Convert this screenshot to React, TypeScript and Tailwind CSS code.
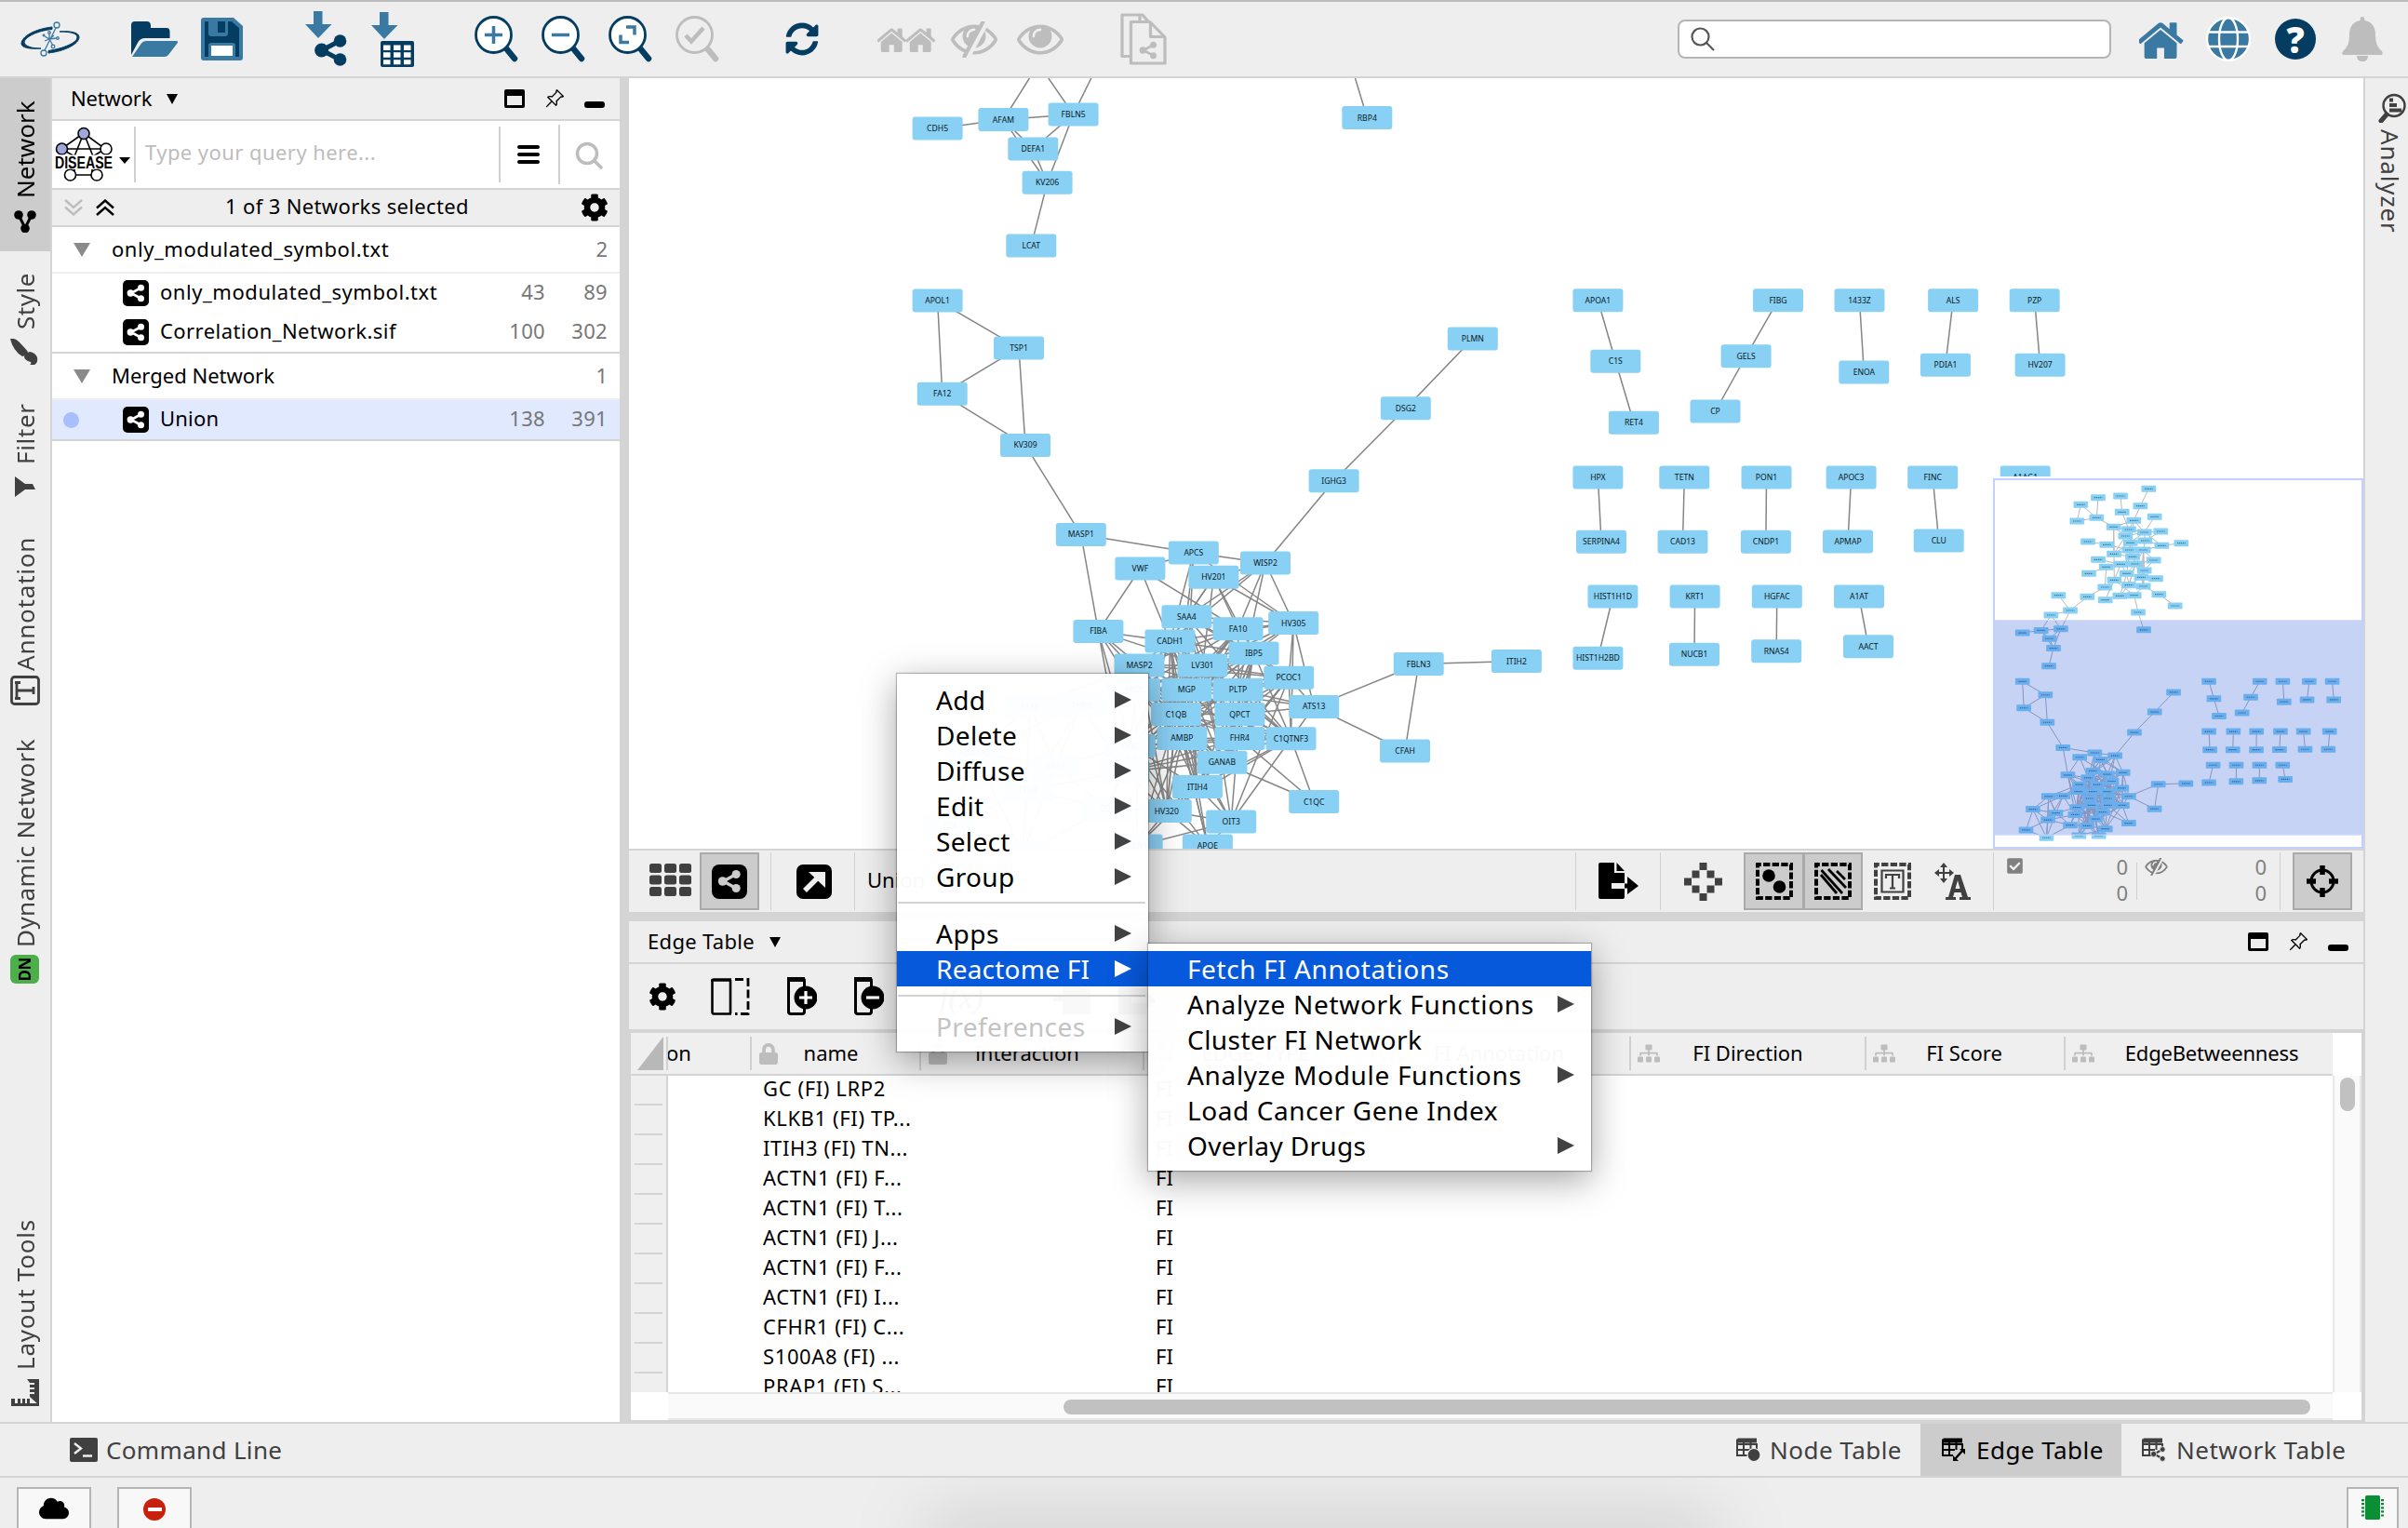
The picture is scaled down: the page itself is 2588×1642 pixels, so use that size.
import React from "react";
import { FaCog, FaLock, FaSitemap, FaCheckSquare, FaCloud, FaSyncAlt } from "react-icons/fa";
import { BsPinAngle } from "react-icons/bs";

/* ---------- network data ---------- */

type Node = [string, number, number];

const NODES: Node[] = [
  ["CDH5", 1007.6, 138], ["AFAM", 1078.4, 128.6], ["FBLN5", 1153.6, 122.9], ["DEFA1", 1110.3, 160],
  ["KV206", 1125.6, 196.3], ["LCAT", 1108.3, 264], ["RBP4", 1469.3, 126.5], ["APOL1", 1007.6, 322.9],
  ["TSP1", 1095, 373.9], ["FA12", 1012.7, 423.3], ["KV309", 1102, 478.4], ["PLMN", 1582.8, 364],
  ["DSG2", 1510.8, 438.8], ["IGHG3", 1433.6, 516.7], ["MASP1", 1161.8, 574.4], ["APCS", 1282.8, 594],
  ["WISP2", 1360, 605], ["VWF", 1225.4, 611], ["HV201", 1304.4, 620.3], ["SAA4", 1275.4, 662.8],
  ["HV305", 1390.2, 669.5], ["FA10", 1330.5, 675.8], ["FIBA", 1180.4, 678.4], ["CADH1", 1257.5, 689],
  ["IBP5", 1347.5, 702], ["MASP2", 1224.5, 715], ["LV301", 1292.4, 715], ["PCOC1", 1385.2, 728.3],
  ["PROC", 1220, 741.3], ["MGP", 1275.4, 741.3], ["PLTP", 1330.5, 741.3], ["ATS13", 1412.2, 759.4],
  ["C1QB", 1264, 767.5], ["QPCT", 1332.4, 767.5], ["AMBP", 1270.4, 793.4], ["FHR4", 1332.4, 793.4],
  ["C1QTNF3", 1387.5, 793.8], ["LYSC", 1214.8, 801.6], ["GANAB", 1313.5, 819.3], ["C8A", 1208.3, 829],
  ["ITIH4", 1286.9, 845.6], ["HV320", 1253.8, 871.5], ["OIT3", 1323.2, 883], ["C1QC", 1412.2, 861.5],
  ["FBN1", 1222.6, 908.9], ["APOE", 1297.9, 908.9], ["FBLN3", 1524.7, 713.5], ["ITIH2", 1629.9, 710.6],
  ["CFAH", 1510, 807], ["F13B", 1107, 759.8], ["THRB", 1162.5, 758], ["ADIPOQ", 1047.5, 808.6],
  ["SAA1", 1134.5, 823], ["TTHY", 1104.6, 849], ["CO9", 1189.6, 869], ["PF4", 1021, 887.4],
  ["A2AP", 1099, 917],
  ["APOA1", 1717.4, 322.7], ["C1S", 1736.3, 388.3], ["RET4", 1755.9, 454.3], ["FIBG", 1911, 322.7],
  ["GELS", 1876.6, 382.7], ["CP", 1843.5, 442], ["1433Z", 1998.5, 322.7], ["ENOA", 2003.3, 400],
  ["ALS", 2099.1, 322.7], ["PDIA1", 2090.9, 392.3], ["PZP", 2186.7, 322.7], ["HV207", 2192.6, 392.3],
  ["HPX", 1717.4, 513], ["TETN", 1810.3, 513], ["PON1", 1898.5, 513], ["APOC3", 1989.6, 513],
  ["FINC", 2077.2, 513], ["A1AG1", 2176.7, 513], ["SERPINA4", 1721, 582.3], ["CAD13", 1808.5, 582.3],
  ["CNDP1", 1897.9, 582.3], ["APMAP", 1986, 582], ["CLU", 2083.7, 581], ["A1BG", 2171.7, 581],
  ["HIST1H1D", 1733.4, 641], ["KRT1", 1821.6, 641], ["HGFAC", 1909.8, 641], ["A1AT", 1998, 641],
  ["HIST1H2BD", 1717.4, 707.3], ["NUCB1", 1821, 703.3], ["RNAS4", 1909.2, 699.7], ["AACT", 2008, 694.7],
];

const LINKS = `CDH5-AFAM AFAM-FBLN5 AFAM-DEFA1 AFAM-KV206 FBLN5-DEFA1 FBLN5-KV206 DEFA1-KV206 KV206-LCAT
APOL1-TSP1 APOL1-FA12 TSP1-FA12 TSP1-KV309 FA12-KV309 KV309-MASP1 MASP1-APCS MASP1-FIBA APCS-WISP2 VWF-APCS
VWF-FIBA VWF-CADH1 VWF-FA10 WISP2-IGHG3 IGHG3-DSG2 DSG2-PLMN APCS-CADH1 APCS-SAA4 APCS-MGP APCS-HV305
HV201-WISP2 HV201-SAA4 HV201-CADH1 HV201-FA10 HV201-IBP5 HV201-HV305 HV201-LV301 WISP2-SAA4 WISP2-CADH1
WISP2-HV305 WISP2-FA10 WISP2-PLTP HV305-SAA4 HV305-FA10 HV305-IBP5 HV305-LV301 HV305-PCOC1 HV305-ATS13
HV305-C1QTNF3 HV305-CADH1 HV305-MGP FIBA-CADH1 FIBA-LV301 FIBA-MASP2 FIBA-PROC FIBA-LYSC FIBA-C1QB FIBA-C8A
ATS13-PCOC1 ATS13-PLTP ATS13-QPCT ATS13-C1QTNF3 ATS13-MGP ATS13-FBLN3 ATS13-CFAH FBLN3-CFAH FBLN3-ITIH2
C1QC-C1QTNF3 C1QC-FHR4 C1QC-GANAB OIT3-C1QTNF3 OIT3-PCOC1 OIT3-GANAB OIT3-ITIH4 OIT3-AMBP OIT3-HV320
OIT3-FBN1 OIT3-QPCT OIT3-C1QB APOE-HV320 APOE-AMBP APOE-C1QB APOE-ITIH4 APOE-OIT3 APOE-LYSC FBN1-HV320
FBN1-ITIH4 FBN1-C1QB FBN1-AMBP FBN1-PROC F13B-THRB F13B-ADIPOQ F13B-SAA1 F13B-TTHY F13B-PROC F13B-A2AP
F13B-MASP2 THRB-SAA1 THRB-ADIPOQ THRB-PROC THRB-C8A THRB-TTHY THRB-MASP2 ADIPOQ-SAA1 ADIPOQ-TTHY ADIPOQ-PF4
ADIPOQ-A2AP SAA1-LYSC SAA1-TTHY SAA1-A2AP SAA1-CO9 SAA1-F13B TTHY-PF4 TTHY-CO9 TTHY-A2AP CO9-A2AP CO9-C8A
CO9-HV320 CO9-LYSC PF4-A2AP TTHY-C8A APOA1-C1S C1S-RET4 FIBG-GELS GELS-CP 1433Z-ENOA ALS-PDIA1 PZP-HV207
HPX-SERPINA4 TETN-CAD13 PON1-CNDP1 APOC3-APMAP FINC-CLU A1AG1-A1BG HIST1H1D-HIST1H2BD KRT1-NUCB1 HGFAC-RNAS4
A1AT-AACT`.split(/\s+/).map((s) => s.split("-"));

const CORE = [
  "SAA4", "FA10", "CADH1", "IBP5", "MASP2", "LV301", "PROC", "MGP", "PLTP", "C1QB", "QPCT",
  "AMBP", "FHR4", "LYSC", "GANAB", "ITIH4", "HV320", "PCOC1", "C1QTNF3", "C8A",
];

const POS = new Map(NODES.map(([n, x, y]) => [n, [x, y]]));

function coreLinks() {
  const out: string[][] = [];
  let seed = 7;
  for (let i = 0; i < CORE.length; i++)
    for (let j = i + 1; j < CORE.length; j++) {
      seed = (seed * 1103515245 + 12345) % 2147483648;
      if (seed / 2147483648 < 0.68) out.push([CORE[i], CORE[j]]);
    }
  return out;
}

const EDGES = [...LINKS, ...coreLinks()].map(([a, b]) => [...POS.get(a)!, ...POS.get(b)!]);
const OFFSCREEN = [[1106.4, 84, 1078.4, 128.6], [1126.8, 84, 1153.6, 122.9], [1172.8, 84, 1153.6, 122.9], [1456.5, 84, 1469.3, 126.5]];

/* upper part of the overview, in overview units */
const TOP: number[][] = [
  [538, 76], [375, 104], [319, 127], [447, 99], [511, 131], [307, 180], [370, 169], [452, 151], [490, 178], [557, 166],
  [425, 199], [474, 207], [524, 216], [577, 213], [463, 228], [479, 250], [526, 243], [342, 246], [403, 256], [580, 259],
  [643, 251], [475, 273], [521, 273], [426, 286], [486, 295], [375, 304], [554, 306], [448, 319], [495, 318], [401, 328],
  [524, 339], [345, 349], [467, 349], [514, 361], [561, 365], [427, 370], [474, 386], [521, 390], [397, 393], [445, 421],
  [491, 419], [398, 434], [571, 416], [340, 424], [247, 419], [623, 453], [285, 468], [504, 474], [223, 483],
];
const TOP_LINKS: number[][] = [
  [0, 4], [4, 8], [1, 6], [2, 6], [2, 5], [5, 6], [6, 10], [3, 7], [7, 11], [8, 10], [8, 11], [8, 12], [9, 12], [10, 11],
  [10, 14], [10, 23], [10, 35], [11, 12], [11, 15], [12, 13], [12, 14], [12, 16], [12, 19], [13, 16], [14, 15], [14, 23], [15, 16],
  [15, 21], [16, 22], [17, 18], [18, 21], [19, 20], [19, 22], [19, 16], [21, 22], [21, 24], [21, 23], [22, 24], [22, 26],
  [22, 28], [22, 30], [22, 33], [22, 37], [23, 24], [24, 27], [24, 28], [25, 27], [26, 28], [26, 30], [27, 29], [27, 28],
  [27, 32], [27, 35], [28, 30], [28, 32], [28, 33], [28, 36], [29, 31], [29, 38], [30, 33], [30, 37], [32, 36], [33, 36],
  [33, 34], [33, 37], [35, 38], [35, 40], [35, 41], [36, 39], [36, 28], [32, 39], [37, 42], [37, 40], [38, 43], [42, 45], [43, 46],
  [44, 46], [46, 48], [40, 47], [12, 23], [8, 32], [11, 28],
];

const mx = (x: number) => 131 + (x - 1007.6) * 0.847;
const my = (y: number) => 697 + (y - 322.9) * 0.848;

function NetworkGraph() {
  return (
    <svg className="block h-[828px] w-[1864px]" viewBox="676 84 1864 828">
      <g stroke="#858585" strokeWidth="1.5">
        {[...EDGES, ...OFFSCREEN].map(([a, b, c, d], i) => (
          <line key={i} x1={a} y1={b} x2={c} y2={d} />
        ))}
      </g>
      {NODES.map(([n, x, y]) => (
        <g key={n}>
          <rect x={x - 27} y={y - 12.5} width="54" height="25" rx="3" fill="#89d0f5" />
          <text x={x} y={y + 3} textAnchor="middle" className="text-[8.6px]" fill="#0a1820">{n}</text>
        </g>
      ))}
    </svg>
  );
}

function MiniNode({ x, y }: { x: number; y: number }) {
  return (
    <g>
      <rect x={x - 23.5} y={y - 10.5} width="47" height="21" rx="2" fill="#89d0f5" />
      <path d={`M${x - 13} ${y}H${x + 13}`} stroke="#3f7795" strokeWidth="3.500" strokeDasharray="4 2" />
    </g>
  );
}

function Overview() {
  return (
    <div className="absolute bottom-0 right-0 h-[398px] w-[398px] border-2 border-[#c0d0ff] bg-white outline outline-2 outline-white">
      <svg className="block h-[394px] w-[394px]" viewBox="42 48 1182 1182">
        <g stroke="#b9b9b9" strokeWidth="3">
          {TOP_LINKS.map(([a, b], i) => (
            <line key={i} x1={TOP[a][0]} y1={TOP[a][1]} x2={TOP[b][0]} y2={TOP[b][1]} />
          ))}
          <path d="M223 483L191 533M223 483L255 528M285 468L255 528M504 474L522 531" />
          {EDGES.map(([a, b, c, d], i) => (
            <line key={i} x1={mx(a)} y1={my(b)} x2={mx(c)} y2={my(d)} stroke="#acaebb" strokeWidth="3" />
          ))}
        </g>
        {TOP.map(([x, y], i) => <MiniNode key={i} x={x} y={y} />)}
        {NODES.map(([n, x, y]) => <MiniNode key={n} x={mx(x)} y={my(y)} />)}
        <rect x="42" y="498" width="1182" height="694" fill="rgba(0,60,210,.225)" />
        <path d="M42 499.500H1224M42 1191.500H1224" stroke="#d3defa" strokeWidth="3" />
      </svg>
    </div>
  );
}

/* ---------- icons ---------- */

const DARK = "#053c61";
const MID = "#3a79a1";
const DIM = "#bdbdbd";

const HOME = "M1408 992v480q0 26-19 45t-45 19h-384v-384h-256v384h-384q-26 0-45-19t-19-45v-480q0-1 .5-3t.5-3l575-474 575 474q1 2 1 6zm223-69l-62 74q-8 9-21 11h-3q-13 0-21-7l-692-577-692 577q-12 8-24 7-13-2-21-11l-62-74q-8-10-7-23.500t11-21.500l719-599q32-26 76-26t76 26l244 204v-195q0-14 9-23t23-9h192q14 0 23 9t9 23v408l219 182q10 8 11 21.500t-7 23.500z";
const EYE = "M1664 960q-152-236-381-353 61 104 61 225 0 185-131.500 316.500t-316.500 131.500-316.500-131.500-131.500-316.500q0-121 61-225-229 117-381 353 133 205 333.500 326.500t434.500 121.500 434.500-121.500 333.500-326.500zm-720-384q0-20-14-34t-34-14q-125 0-214.500 89.500t-89.500 214.500q0 20 14 34t34 14 34-14 14-34q0-86 61-147t147-61q20 0 34-14t14-34zm848 384q0 34-20 69-140 230-376.500 368.500t-499.500 138.500-499.500-139-376.500-368q-20-35-20-69t20-69q140-229 376.500-368t499.500-139 499.500 139 376.500 368q20 35 20 69z";

function Home({ className, color }: { className: string; color: string }) {
  return <svg className={className} viewBox="72 180 1648 1356" fill={color}><path d={HOME} /></svg>;
}

function Eye({ className, color, slash }: { className: string; color: string; slash?: boolean }) {
  return (
    <svg className={className} viewBox="0 260 1792 1400" fill={color}>
      <path d={EYE} />
      {slash && (
        <>
          <path d="M640 1640L1360 300" stroke="#eee" strokeWidth="210" />
          <path d="M520 1610L1230 290" stroke={color} strokeWidth="150" strokeLinecap="round" />
        </>
      )}
    </svg>
  );
}

function Lens({ children, color = DARK, fill = "#fff" }: { children: React.ReactNode; color?: string; fill?: string }) {
  return (
    <svg className="mr-6 h-[50px] w-12" viewBox="0 0 48 50" fill="none">
      <path d="M34 35L43 46" stroke={color} strokeWidth="6.500" strokeLinecap="round" />
      <circle cx="20.500" cy="20.500" r="19" fill={fill} stroke={color} strokeWidth="2.800" />
      {children}
    </svg>
  );
}

const SHARE = (
  <>
    <path d="M15 4.500L5 10L15 15.500" fill="none" stroke="currentColor" strokeWidth="2.600" />
    <circle cx="15.500" cy="4.200" r="3.500" /><circle cx="4.300" cy="10" r="3.700" /><circle cx="15.500" cy="15.800" r="3.500" />
  </>
);

function ShareBadge({ className, size }: { className: string; size: string }) {
  return (
    <span className={className}>
      <svg className={size} viewBox="0 0 20 20" fill="currentColor">{SHARE}</svg>
    </span>
  );
}

function WindowButtons() {
  return (
    <div className="ml-auto flex items-center">
      <svg className="h-5 w-[22px]" viewBox="0 0 22 20"><path d="M2 0h18a2 2 0 0 1 2 2v16a2 2 0 0 1-2 2H2a2 2 0 0 1-2-2V2a2 2 0 0 1 2-2zM3 7v10h16V7z" fillRule="evenodd" /></svg>
      <BsPinAngle className="ml-[21px] size-[22px]" />
      <span className="ml-[21px] mt-3 h-[7px] w-[22px] rounded-[3px] bg-black" />
    </div>
  );
}

function Down({ className }: { className: string }) {
  return <svg className={className} viewBox="0 0 10 10" preserveAspectRatio="none" fill="currentColor"><path d="M0 0h10L5 10z" /></svg>;
}

/* ---------- top toolbar ---------- */

function Toolbar() {
  return (
    <div className="flex h-[82px] shrink-0 items-center border-b-2 border-[#d4d4d4]">
      <svg className="ml-5 h-[44px] w-[68px]" viewBox="20 20 68 44" fill="none" stroke={DARK}>
        <path d="M56 29C38 31 23 39 23 47C23 51 31 53 44 52C34 52 28 50 26 46C26 40 40 33 56 31.500z" fill={DARK} strokeWidth="1" />
        <path d="M52 57C70 55 85 47 85 40C85 35 77 33 64 34C76 34 83 36 83 40C83 46 68 52 52 54.500z" fill={DARK} strokeWidth="1" />
        <g stroke={MID} strokeWidth="1.300">
          <path d="M60 30L48 54M53 36V42L48 39M53 42L61 41M53 42L57 49M53 42L48 44M53 42L58 38" />
          <circle cx="61" cy="27" r="3" fill="#eee" /><circle cx="47" cy="57" r="3" fill="#eee" />
          <circle cx="53" cy="35" r="1.300" /><circle cx="62" cy="41" r="1.300" /><circle cx="57" cy="50" r="1.800" /><circle cx="47" cy="38" r=".8" />
        </g>
      </svg>
      <svg className="ml-[52px] h-10 w-[52px]" viewBox="140 22 52 40">
        <path d="M141 59V27Q141 23 145 23H158Q161.500 23 162 27V30H179Q182.500 30 182.500 34V41H156Q151 41 148.500 45z" fill={DARK} />
        <path d="M142 61L152 46.500Q153.500 44 157 44H189.500Q192 44 190.500 46.500L181 59Q179.500 61 176.500 61z" fill={MID} />
      </svg>
      <svg className="ml-6 h-[46px] w-[46px]" viewBox="0 0 46 46">
        <path d="M3 0h32l10 9v34a3 3 0 0 1-3 3H3a3 3 0 0 1-3-3V3a3 3 0 0 1 3-3z" fill={MID} />
        <path d="M4 4h4v13q0 3 3 3h15q3 0 3-3V4h4l8 7v31h-4V30q0-3-3-3H11q-3 0-3 3v12H4z" fill={DARK} />
        <path d="M18 4h8v12h-8z" fill={DARK} />
        <path d="M11 30h23v11H11z" fill="#fff" />
      </svg>
      <svg className="ml-[66px] h-[60px] w-[46px]" viewBox="328 13 46 60">
        <path d="M337 13h9.500v14H356.500L342 42L328 27h9z" fill={MID} />
        <path d="M365 45L346 55L365 65" fill="none" stroke={DARK} strokeWidth="5" />
        <g fill={DARK}><circle cx="365.500" cy="45" r="6.800" /><circle cx="345.600" cy="55" r="7.500" /><circle cx="365.500" cy="65" r="6.800" /></g>
      </svg>
      <svg className="ml-[25px] h-[60px] w-[47px]" viewBox="399 13 47 60">
        <path d="M408 14h9.500v14H427.500L413 43L399 28h9z" fill={MID} />
        <rect x="409" y="45" width="36" height="28" rx="2" fill={DARK} />
        <path d="M412 49.500h7.500v5.500H412zM423 49.500h7.500v5.500H423zM434 49.500h7.500v5.500H434zM412 57.300h7.500v5.500H412zM423 57.300h7.500v5.500H423zM434 57.300h7.500v5.500H434zM412 65.200h7.500v5H412zM423 65.200h7.500v5H423zM434 65.200h7.500v5H434z" fill="#fff" />
      </svg>
      <div className="ml-16 flex">
        <Lens><path d="M11 20.500h19M20.500 11v19" stroke={MID} strokeWidth="3.500" /></Lens>
        <Lens><path d="M11 20.500h19" stroke={MID} strokeWidth="3.500" /></Lens>
        <Lens><path d="M19 12H28V20.500M13 20.500V28.500H22" stroke={MID} strokeWidth="3.500" /></Lens>
        <Lens color={DIM} fill="#eee"><path d="M11 21l6 6.500L30 13" stroke={DIM} strokeWidth="4.500" /></Lens>
      </div>
      <FaSyncAlt className="ml-[46px] size-[36px]" color={DARK} />
      <div className="ml-[63px] flex">
        <Home className="h-[27px] w-[33px]" color={DIM} />
        <Home className="-ml-[2px] h-[27px] w-[33px]" color={DIM} />
      </div>
      <Eye className="ml-[15px] h-[39px] w-[50px]" color={DIM} slash />
      <Eye className="ml-[21px] h-[39px] w-[50px]" color={DIM} />
      <svg className="ml-[61px] h-[56px] w-[50px]" viewBox="0 0 50 56" fill="none" stroke={DIM} strokeWidth="3.200" strokeLinejoin="round">
        <path d="M11 46.500H2V2H24L30 9M21 2V9" />
        <path d="M11.500 9.500H32L48 26V54H11.500zM32.500 9.500V25.500H48" />
        <g fill={DIM} stroke="none" color={DIM} transform="translate(20 30)">{SHARE}</g>
      </svg>
      <div className="ml-auto flex h-[42px] w-[466px] items-center rounded-lg border-2 border-[#b5b5b5] bg-white pl-3">
        <svg className="h-[26px] w-7" viewBox="0 0 28 26" fill="none" stroke="#555" strokeWidth="2.200"><circle cx="10.500" cy="10.500" r="9" /><path d="M17 17l8 8" /></svg>
      </div>
      <Home className="ml-[30px] h-[41px] w-[50px]" color={MID} />
      <svg className="ml-[21px] h-[50px] w-[50px]" viewBox="0 0 50 50" fill="none" stroke="#fff" strokeWidth="2.400">
        <circle cx="25" cy="25" r="23" fill={MID} />
        <ellipse cx="25" cy="25" rx="10" ry="23" /><path d="M4 17.500h42M4 33h42" />
      </svg>
      <span className="ml-[25px] flex size-[44px] items-center justify-center rounded-full bg-[#053c61] text-[38px] font-black leading-none text-white">?</span>
      <svg className="ml-7 mr-[27px] h-12 w-11" viewBox="0 0 44 48" fill={DIM}>
        <path d="M22 0q2.500 0 2.500 4Q36 6 36 20Q36 32 43 37Q45 41 42 41H2Q-1 41 1 37Q8 32 8 20Q8 6 19.500 4Q19.500 0 22 0zM16 42h12q0 6-6 6t-6-6z" />
      </svg>
    </div>
  );
}

/* ---------- side strips ---------- */

const VTEXT = "flex rotate-180 items-center justify-center whitespace-nowrap text-[26px] leading-[32px] [writing-mode:vertical-rl]";

function SideStrip() {
  return (
    <div className="flex w-14 shrink-0 flex-col border-r-2 border-[#d4d4d4] text-[#404040]">
      <div className="flex h-[186px] flex-col items-center bg-[#ccc] pr-px pt-[26px] text-black">
        <span className={`${VTEXT} h-[102px]`}>Network</span>
        <svg className="mt-[14px] h-6 w-6" viewBox="0 0 24 24"><path d="M5 5L12 19L19 5" fill="none" stroke="#000" strokeWidth="3" /><circle cx="5" cy="5" r="4.800" /><circle cx="19" cy="5" r="4.800" /><circle cx="12" cy="19.500" r="4.800" /></svg>
      </div>
      <div className="flex flex-col items-center pr-px pt-6">
        <span className={`${VTEXT} h-[59px] tracking-[0.02em]`}>Style</span>
        <svg className="mr-px mt-[11px] h-[28px] w-[30px]" viewBox="12 364 30 28" fill="#404040"><path d="M12 364q5-1 9 3q7 7 10 11q-1 4-6 5q-10-6-13-19zM33 378q6 1 8 6q1 6-3 8h-5q2-1 1-3q-7-2-7-6q2-4 6-5z" /></svg>
      </div>
      <div className="flex flex-col items-center pr-px pt-[41px]">
        <span className={`${VTEXT} h-[66px] tracking-[0.025em]`}>Filter</span>
        <svg className="mt-[12px] h-6 w-[22px]" viewBox="0 0 22 24" fill="#404040"><path d="M0 1v22L11 15h11l-3-6h-8z" /></svg>
      </div>
      <div className="flex flex-col items-center pr-px pt-[43px]">
        <span className={`${VTEXT} h-[141px] tracking-[0.03em]`}>Annotation</span>
        <svg className="mt-[7px] h-8 w-8" viewBox="0 0 32 32" fill="none" stroke="#404040" strokeWidth="2.800"><rect x="1.500" y="1.500" width="29" height="29" rx="3" /><path d="M7 25v-18M7 16h18M5 24.500h6M5 7.500h6M25 12v8" /></svg>
      </div>
      <div className="flex flex-col items-center pr-px pt-[37px]">
        <span className={`${VTEXT} h-[222px] tracking-[0.016em]`}>Dynamic Network</span>
        <span className="mt-[9px] flex h-[31px] w-[31px] items-center justify-center rounded-md bg-[#4caf4a] text-black"><span className="rotate-180 text-[17px] font-bold leading-none tracking-tight [writing-mode:vertical-rl]">DN</span></span>
      </div>
      <div className="mt-auto flex flex-col items-center pb-[16px] pr-px">
        <span className={`${VTEXT} h-[159px] tracking-[0.03em]`}>Layout Tools</span>
        <svg className="mt-[12px] h-[30px] w-[30px]" viewBox="0 0 30 30" fill="#404040"><path d="M0 21h4v5h3v-5h3v5h2v-5h3v5h2v-5h3v5h10v3H0zM17 0h13v28L20 19V16h5v-2h-5v-3h5V9h-5V6h5V4h-5z" /></svg>
      </div>
    </div>
  );
}

function RightStrip() {
  return (
    <div className="flex flex-1 flex-col items-center pl-[11px] text-[#404040]">
      <svg className="mt-[16px] h-[32px] w-[30px]" viewBox="0 0 30 32" fill="none" stroke="#404040"><circle cx="17" cy="13.500" r="11.500" strokeWidth="2.400" /><path d="M9 23L3 30" strokeWidth="5" strokeLinecap="round" /><path d="M12 7.500h4M12 13h8M12 18.500h13" strokeWidth="4" /></svg>
      <span className="mr-1 mt-[7px] text-[26px] leading-[32px] tracking-[0.032em] [writing-mode:vertical-rl]">Analyzer</span>
    </div>
  );
}

/* ---------- left panel ---------- */

function NetRow({ name, nodes, edges, selected, track = "" }: { name: string; nodes: string; edges: string; selected?: boolean; track?: string }) {
  return (
    <div className={selected ? "flex h-[42px] items-center bg-[#e1e9ff] pl-3 pr-[13px]" : "flex h-[42px] items-center pl-3 pr-[13px]"}>
      <span className={selected ? "size-[17px] rounded-full bg-[#a9bffa]" : "size-[17px]"} />
      <ShareBadge className="ml-[47px] flex size-7 items-center justify-center rounded-[5px] bg-black text-white" size="size-5" />
      <span className={`ml-3 flex-1 pb-[3px] ${track}`}>{name}</span>
      <span className="pb-[3px] tracking-[0.015em] text-[#777]">{nodes}</span>
      <span className="w-[67px] pb-[3px] text-right tracking-[0.015em] text-[#777]">{edges}</span>
    </div>
  );
}

function Collection({ name, count, track }: { name: string; count: string; track: string }) {
  return (
    <div className="flex h-[50px] items-center border-b-2 border-[#eee] pl-[23px] pr-[13px]">
      <Down className="h-[15px] w-[18px] text-[#8a8a8a]" />
      <span className={`ml-[23px] flex-1 pb-[2px] ${track}`}>{name}</span>
      <span className="pb-[2px] text-[#777]">{count}</span>
    </div>
  );
}

function NetworkPanel() {
  return (
    <div className="flex w-[610px] shrink-0 flex-col bg-white text-[22px]">
      <div className="flex h-[46px] items-center border-b-2 border-[#d4d4d4] bg-[#eee] pl-[20px] pr-4">
        <span className="pb-px tracking-[-0.008em]">Network</span>
        <Down className="ml-[16px] h-[11px] w-3" />
        <WindowButtons />
      </div>
      <div className="flex h-[74px] items-center border-b-2 border-[#d4d4d4]">
        <svg className="ml-[2px] h-[60px] w-[64px] shrink-0" viewBox="58 136 64 60" fill="#fff" stroke="#000" strokeWidth="1.600">
          <path d="M90 143L66 160H113L90 143L80 168M90 143L100 168M66 160L80 168M113 160L100 168M76 188H104M80 182V188M99 182V188" fill="none" />
          <circle cx="90" cy="143.500" r="6" fill="#9fa8da" /><circle cx="66.500" cy="160" r="6" fill="#9fa8da" /><circle cx="114" cy="160" r="6" />
          <circle cx="75.500" cy="188" r="6" /><circle cx="104" cy="188" r="6" />
          <rect x="58" y="166.500" width="64" height="15" stroke="none" />
          <text x="59" y="181" fill="#000" stroke="none" textLength="62" lengthAdjust="spacingAndGlyphs" className="text-[17.500px] font-semibold" fontFamily="Liberation Sans, sans-serif">DISEASE</text>
        </svg>
        <Down className="ml-[6px] mt-[12px] h-[7px] w-3" />
        <span className="ml-1 h-[60px] w-[2px] bg-[#d0d0d0]" />
        <span className="ml-[10px] flex-1 pb-[5px] tracking-[0.02em] text-[#bdbdbd]">Type your query here...</span>
        <span className="h-[60px] w-[2px] bg-[#d0d0d0]" />
        <span className="ml-[18px] flex h-5 w-6 flex-col justify-between"><i className="h-1 rounded-sm bg-black" /><i className="h-1 rounded-sm bg-black" /><i className="h-1 rounded-sm bg-black" /></span>
        <span className="ml-5 h-16 w-[2px] bg-[#d0d0d0]" />
        <svg className="ml-4 mr-[18px] mt-[2px] h-[30px] w-[30px]" viewBox="0 0 30 30" fill="none" stroke="#bdbdbd" strokeWidth="3.500" strokeLinecap="round"><circle cx="13" cy="13" r="10.500" /><path d="M21 21l7 7" /></svg>
      </div>
      <div className="flex h-10 items-center border-b-2 border-[#d4d4d4] bg-[#eee] pl-[13px] pr-3">
        <svg className="h-[18px] w-5" viewBox="0 0 20 18" fill="none" stroke="#bdbdbd" strokeWidth="2.400"><path d="M1 1l9 8l9-8M1 8.500l9 8l9-8" /></svg>
        <svg className="ml-[14px] h-[18px] w-5" viewBox="0 0 20 18" fill="none" stroke="#000" strokeWidth="2.400"><path d="M1 9.500l9-8l9 8M1 17l9-8l9 8" /></svg>
        <span className="flex-1 pb-[3px] pr-px text-center tracking-[0.016em]">1 of 3 Networks selected</span>
        <FaCog className="size-[30px]" />
      </div>
      <Collection name="only_modulated_symbol.txt" count="2" track="tracking-[0.025em]" />
      <div className="border-b-2 border-[#d4d4d4]">
        <NetRow name="only_modulated_symbol.txt" nodes="43" edges="89" track="tracking-[0.025em]" />
        <NetRow name="Correlation_Network.sif" nodes="100" edges="302" track="tracking-[0.02em]" />
      </div>
      <Collection name="Merged Network" count="1" track="tracking-normal" />
      <div className="border-b-2 border-[#d4d4d4]">
        <NetRow name="Union" nodes="138" edges="391" selected track="tracking-[0.01em]" />
      </div>
    </div>
  );
}

/* ---------- network view toolbar ---------- */

const DASHED_FRAME = <rect x="2" y="2" width="36" height="36" fill="none" stroke="currentColor" strokeWidth="4" strokeDasharray="7.300 2.300" strokeDashoffset="3.500" />;

function ViewToolbar() {
  return (
    <div className="flex h-[68px] items-center border-t-2 border-[#d4d4d4] pl-[22px] pr-3">
      <svg className="mb-1 h-[35px] w-[45px]" viewBox="0 0 45 35" fill="#404040">
        {[0, 16, 32].map((x) => [0, 12.5, 25].map((y) => <rect key={x + "-" + y} x={x} y={y} width="13" height="10" rx="2.500" />))}
      </svg>
      <span className="ml-[9px] flex h-[62px] w-[64px] items-center justify-center border-2 border-[#aaa] bg-[#ccc]">
        <ShareBadge className="flex h-[37px] w-[38px] items-center justify-center rounded-lg bg-black text-[#ccc]" size="size-[26px]" />
      </span>
      <span className="ml-3 h-[62px] w-px bg-[#d0d0d0]" />
      <svg className="ml-[27px] h-[37px] w-[38px]" viewBox="0 0 38 37"><rect width="38" height="37" rx="7" /><path d="M9 28L24 13" stroke="#eee" strokeWidth="5.500" /><path d="M13 8H31V25z" fill="#eee" /></svg>
      <span className="ml-6 h-[62px] w-px bg-[#d0d0d0]" />
      <span className="ml-[13px] pb-[3px] text-[22px]">Union</span>
      <span className="ml-auto h-[62px] w-px bg-[#d0d0d0]" />
      <svg className="ml-6 h-10 w-[44px]" viewBox="0 0 44 40"><path d="M2 0H17V11H28V22H14V28H28V37a2 2 0 0 1-2 2H2a2 2 0 0 1-2-2V2a2 2 0 0 1 2-2z" /><path d="M19.500 0L28 9H19.500zM31 15L43 25L31 34z" /><path d="M15 22.500h14v5H15z" fill="#eee" /><path d="M28 22.500h4v5h-4z" /></svg>
      <span className="ml-[22px] h-[62px] w-px bg-[#d0d0d0]" />
      <svg className="ml-[25px] h-[41px] w-[41px]" viewBox="0 0 41 41" fill="#404040"><path d="M16.500 0h8v8h-8zM8.500 8.500h8v8h-8zM24.500 8.500h8v8h-8zM0 16.500h8v8H0zM33 16.500h8v8h-8zM8.500 24.500h8v8h-8zM24.500 24.500h8v8h-8zM16.500 33h8v8h-8z" /></svg>
      <span className="ml-[23px] flex h-[62px] w-[65px] items-center justify-center border-2 border-[#aaa] bg-[#ccc]">
        <svg className="size-10" viewBox="0 0 40 40">{DASHED_FRAME}<circle cx="14" cy="14" r="6.800" /><circle cx="25.500" cy="26" r="6.800" /></svg>
      </span>
      <span className="-ml-px flex h-[62px] w-[64px] items-center justify-center border-2 border-[#aaa] bg-[#ccc]">
        <svg className="size-10" viewBox="0 0 40 40">{DASHED_FRAME}<path d="M7 13L24 33M7.500 8L30 33M15 7L34 27M24 9L33 18" stroke="#000" strokeWidth="2.800" /></svg>
      </span>
      <svg className="ml-3 size-10 text-[#404040]" viewBox="0 0 40 40">{DASHED_FRAME}<path d="M8.500 8.500h23v23h-23zM13 17v-4h14v4M20 13v14M17 27.500h6" fill="none" stroke="#404040" strokeWidth="2.200" /></svg>
      <svg className="ml-[25px] h-10 w-[40px]" viewBox="0 0 40 40" fill="#404040">
        <path d="M10 2v18M1 11h18" stroke="#404040" strokeWidth="2" /><path d="M10 0l4 5H6zM10 22l4-5H6zM0 11l5-4v8zM21 11l-5-4v8z" />
        <path d="M22 13h6l8 24h3v3h-12v-3h3l-1.500-5h-7L20 37h3v3H12v-3h3zM22.500 28h5L25 19z" fillRule="evenodd" />
      </svg>
      <span className="ml-[23px] h-[62px] w-px bg-[#d0d0d0]" />
      <div className="ml-[13px] flex h-[62px] w-[131px] justify-between text-[22px] leading-[28px] text-[#808080]">
        <FaCheckSquare className="mt-[5px] size-[19px]" />
        <span className="mt-px flex flex-col"><span>0</span><span>0</span></span>
      </div>
      <span className="ml-[9px] h-10 w-px bg-[#d0d0d0]" />
      <div className="ml-[8px] flex h-[62px] w-[131px] justify-between text-[22px] leading-[28px] text-[#808080]">
        <Eye className="mt-[6px] h-[19px] w-[25px]" color="#808080" slash />
        <span className="mt-px flex flex-col"><span>0</span><span>0</span></span>
      </div>
      <span className="ml-[14px] h-[62px] w-px bg-[#d0d0d0]" />
      <span className="ml-[13px] flex h-[62px] w-[64px] items-center justify-center border-2 border-[#aaa] bg-[#ccc]">
        <svg className="size-9" viewBox="0 0 36 36" fill="none" stroke="#000"><circle cx="18" cy="18" r="12" strokeWidth="3" /><path d="M18 1v10M18 25v10M1 18h10M25 18h10" strokeWidth="5.500" /></svg>
      </span>
    </div>
  );
}

/* ---------- edge table ---------- */

const ROWS = ["GC (FI) LRP2", "KLKB1 (FI) TP...", "ITIH3 (FI) TN...", "ACTN1 (FI) F...", "ACTN1 (FI) T...", "ACTN1 (FI) J...", "ACTN1 (FI) F...", "ACTN1 (FI) I...", "CFHR1 (FI) C...", "S100A8 (FI) ...", "PRAP1 (FI) S..."];

function ColumnButton({ minus }: { minus?: boolean }) {
  return (
    <svg className="h-[42px] w-8" viewBox="0 0 32 42" fill="none" stroke="#000">
      <rect x="1.500" y="1.500" width="17" height="38" rx="2.500" strokeWidth="3" /><path d="M0 2.500h19" strokeWidth="5" />
      <circle cx="20" cy="22" r="12.500" fill="#000" stroke="none" />
      <path d={minus ? "M13 22h14" : "M13 22h14M20 15v14"} stroke="#fff" strokeWidth="3.200" />
    </svg>
  );
}

function HeaderCell({ className, icon, label, labelClass = "pr-[38px]" }: { className: string; icon: "lock" | "tree"; label: string; labelClass?: string }) {
  return (
    <div className={`flex h-9 items-center border-l-2 border-[#d0d0d0] ${className}`}>
      {icon === "lock" ? <FaLock className="ml-2 h-[23px] w-5 text-[#bdbdbd]" /> : <FaSitemap className="ml-[7px] h-[22px] w-6 text-[#bdbdbd]" />}
      <span className={`flex-1 pb-[2px] text-center ${labelClass}`}>{label}</span>
    </div>
  );
}

function EdgeTable() {
  return (
    <div className="flex min-h-0 flex-1 flex-col border-b-2 border-[#d4d4d4] text-[22px]">
      <div className="flex h-[46px] shrink-0 items-center border-b-2 border-[#d4d4d4] pl-[20px] pr-4">
        <span className="pb-[2px] tracking-[0.014em]">Edge Table</span>
        <Down className="ml-[16px] h-[11px] w-3" />
        <WindowButtons />
      </div>
      <div className="flex h-[74px] shrink-0 items-center border-b-4 border-[#d4d4d4] pl-[21px]">
        <FaCog className="size-[30px]" />
        <svg className="ml-[37px] h-10 w-[42px]" viewBox="0 0 42 40" fill="none" stroke="#000"><path d="M22 1.500H3Q1.500 1.500 1.500 4V36Q1.500 38.500 3 38.500H22M21 2V38M0 2.500h22" strokeWidth="2.600" /><path d="M26 1.500H40V38.500H26" strokeWidth="2.800" strokeDasharray="9 3.500" /></svg>
        <span className="ml-10 flex gap-10"><ColumnButton /><ColumnButton minus /></span>
        <span className="ml-[60px] w-16 font-['Liberation_Serif',serif] text-[34px] italic">f(x)</span>
        <svg className="ml-[58px] h-[38px] w-[110px]" viewBox="0 0 110 38"><path d="M10 0h20v10h10v28H10V24H0V18h20V10l12 11L20 32V24H10zM70 0h20v10h10v10H84v6h16v12H70zM100 14l11 9l-11 9z" /></svg>
      </div>
      <div className="flex min-h-0 flex-1 border-x-2 border-[#d4d4d4] bg-white">
        <div className="flex w-[1830px] flex-col">
          <div className="flex h-[46px] shrink-0 items-center border-b-2 border-[#d4d4d4] bg-[#efefef]">
            <svg className="ml-[6px] h-9 w-[32px]" viewBox="0 0 30 36"><path d="M28 0V36H0z" fill="#b8b8b8" /></svg>
            <div className="h-9 w-[90px] overflow-hidden border-l-2 border-[#d0d0d0]"><span className="-ml-[2px] block leading-[34px]">on</span></div>
            <HeaderCell className="w-[182px]" icon="lock" label="name" />
            <HeaderCell className="w-[240px]" icon="lock" label="interaction" />
            <HeaderCell className="w-[248px]" icon="tree" label="EDGE_TYPE" />
            <HeaderCell className="w-[275px]" icon="tree" label="FI Annotation" />
            <HeaderCell className="w-[253px]" icon="tree" label="FI Direction" labelClass="pr-[31px]" />
            <HeaderCell className="w-[214px]" icon="tree" label="FI Score" labelClass="pr-[33px]" />
            <HeaderCell className="w-[289px]" icon="tree" label="EdgeBetweenness" labelClass="pr-1 tracking-[-0.008em]" />
          </div>
          <div className="h-[340px] shrink-0 overflow-hidden">
            {ROWS.map((r, i) => (
              <div key={i} className="flex h-8">
                <div className="w-[40px] border-r-2 border-[#d4d4d4] bg-[#efefef] px-1"><div className="h-8 border-b-2 border-[#d4d4d4]" /></div>
                <span className="ml-[102px] w-[422px] leading-[27px] tracking-[0.028em]">{r}</span>
                <span className="leading-[27px]">FI</span>
              </div>
            ))}
          </div>
          <div className="ml-[40px] flex h-[30px] items-center border-y-2 border-[#e8e8e8] bg-[#fafafa]">
            <span className="ml-[425px] mt-[2px] h-4 w-[1340px] rounded-full bg-[#c1c1c1]" />
          </div>
        </div>
        <div className="flex h-[386px] w-[32px] flex-col pt-[46px]">
          <div className="flex-1 border-x-2 border-[#e8e8e8] bg-[#fafafa] pl-[6px] pt-[2px]">
            <div className="h-9 w-4 rounded-full bg-[#c1c1c1]" />
          </div>
        </div>
      </div>
    </div>
  );
}

/* ---------- bottom ---------- */

function TableGlyph({ children, color }: { children: React.ReactNode; color: string }) {
  return (
    <svg className="h-[26px] w-[26px]" viewBox="0 0 26 26" fill="none" stroke={color} color={color}>
      <path d="M1 1.500V19H12M1 7H22V12M8 5v14M15.500 5v8M1 13h13" strokeWidth="2" />
      <path d="M1.500 3H22" strokeWidth="5" />
      {children}
    </svg>
  );
}

function BottomBar() {
  return (
    <div className="flex h-[60px] shrink-0 items-center border-y-2 border-[#d4d4d4] text-[26px] text-[#404040]">
      <svg className="ml-[75px] h-[26px] w-[30px]" viewBox="0 0 30 26"><rect width="30" height="26" rx="2" fill="#404040" /><path d="M5 6l7 5.500L5 17M14 19.500h10" stroke="#eee" strokeWidth="2.400" fill="none" /></svg>
      <span className="ml-[9px] tracking-[0.013em]">Command Line</span>
      <div className="ml-auto flex h-14 items-center pr-[20px]">
        <TableGlyph color="#404040"><circle cx="19" cy="18.500" r="7" fill="#404040" stroke="#eee" strokeWidth="1.200" /></TableGlyph>
        <span className="ml-[10px] tracking-[0.018em]">Node Table</span>
      </div>
      <div className="flex h-14 w-[216px] items-center bg-[#ccc] pl-[23px] text-black">
        <TableGlyph color="#000"><path d="M14 23L23 13" strokeWidth="2.400" /><path d="M19 12h6v6zM12 19v6h6z" fill="#000" stroke="none" /></TableGlyph>
        <span className="ml-[11px] tracking-[0.018em]">Edge Table</span>
      </div>
      <div className="flex h-14 w-[308px] items-center pl-[22px]">
        <TableGlyph color="#404040"><g transform="translate(9 9) scale(.85)" fill="#404040" stroke="#eee" strokeWidth="1">{SHARE}</g></TableGlyph>
        <span className="ml-[11px] tracking-[0.02em]">Network Table</span>
      </div>
    </div>
  );
}

function StatusBar() {
  return (
    <div className="relative flex h-[54px] shrink-0 items-end overflow-hidden">
      <div className="absolute left-[990px] top-[44px] h-14 w-[860px] rounded-full bg-black/15 blur-2xl" />
      <div className="ml-[18px] flex h-11 w-20 items-center justify-center border-2 border-b-0 border-[#b5b5b5] bg-[#f8f8f8]"><FaCloud className="size-[32px]" /></div>
      <div className="ml-[28px] flex h-11 w-20 items-center justify-center border-2 border-b-0 border-[#b5b5b5] bg-[#f8f8f8] pt-0.5"><span className="flex size-[24px] items-center justify-center rounded-full bg-[#c8200c]"><i className="h-1 w-[15px] bg-white" /></span></div>
      <div className="ml-auto mr-2.5 flex h-11 w-14 items-center justify-center border-2 border-b-0 border-[#b5b5b5] bg-[#f8f8f8] pb-0.5">
        <svg className="h-[26px] w-6" viewBox="0 0 24 26"><path d="M1.500 4v18.500M22.500 4v18.500" stroke="#0a8a30" strokeWidth="3" strokeDasharray="2.200 1.900" /><rect x="4" width="16" height="26" rx="1.500" fill="#0a8f34" /></svg>
      </div>
    </div>
  );
}

/* ---------- menus ---------- */

function MenuItem({ label, sub, active, disabled, track = "tracking-[0.021em]", pad }: { label: string; sub?: boolean; active?: boolean; disabled?: boolean; track?: string; pad: string }) {
  return (
    <div className={`flex h-[38px] items-center justify-between ${pad} ${active ? "bg-[#0759db] text-white" : disabled ? "text-[#c3c3c3]" : "text-black"}`}>
      <span className={track}>{label}</span>
      {sub && <svg className={active ? "h-[18px] w-[18px] text-white" : "h-[18px] w-[18px] text-[#424242]"} viewBox="0 0 18 18" fill="currentColor"><path d="M0 0L18 9L0 18z" /></svg>}
    </div>
  );
}

function ContextMenu() {
  const pad = "pl-[42px] pr-[18px]";
  return (
    <div className="absolute left-[964px] top-[724px] h-[406px] w-[270px] bg-white/[.975] pt-[9px] text-[28px] leading-none shadow-[0_0_1px_1px_rgba(0,0,0,.25),0_10px_36px_rgba(0,0,0,.36)]">
      {["Add", "Delete", "Diffuse", "Edit", "Select", "Group"].map((l) => <MenuItem key={l} label={l} sub pad={pad} track="tracking-[0.012em]" />)}
      <div className="mb-[13px] ml-px mr-[3px] mt-2 h-[2px] bg-[#d2d2d2]" />
      <MenuItem label="Apps" sub pad={pad} />
      <MenuItem label="Reactome FI" sub active track="tracking-[0.008em]" pad={pad} />
      <div className="mb-[13px] ml-px mr-[3px] mt-[9px] h-[2px] bg-[#d2d2d2]" />
      <MenuItem label="Preferences" sub disabled pad={pad} track="tracking-[0.015em]" />
    </div>
  );
}

function SubMenu() {
  const pad = "pl-[42px] pr-[18px]";
  return (
    <div className="absolute left-[1234px] top-[1014px] h-[244px] w-[476px] bg-white/[.975] pt-2 text-[28px] leading-none shadow-[0_0_1px_1px_rgba(0,0,0,.25),0_10px_36px_rgba(0,0,0,.36)]">
      <MenuItem label="Fetch FI Annotations" active pad={pad} />
      <MenuItem label="Analyze Network Functions" sub pad={pad} track="tracking-[0.024em]" />
      <MenuItem label="Cluster FI Network" pad={pad} track="tracking-[0.016em]" />
      <MenuItem label="Analyze Module Functions" sub pad={pad} track="tracking-[0.024em]" />
      <MenuItem label="Load Cancer Gene Index" pad={pad} />
      <MenuItem label="Overlay Drugs" sub pad={pad} track="tracking-[0.012em]" />
    </div>
  );
}

export default function App() {
  return (
    <div className="relative flex h-[1642px] w-[2588px] flex-col overflow-hidden bg-[#eee] font-['Noto_Sans',sans-serif] text-black">
      <div className="h-[2px] shrink-0 bg-[#bcbcbc]" />
      <Toolbar />
      <div className="flex h-[1444px] shrink-0">
        <SideStrip />
        <NetworkPanel />
        <div className="w-[10px] shrink-0 bg-[#d4d4d4]" />
        <div className="flex w-[1866px] shrink-0 flex-col border-r-2 border-[#d4d4d4]">
          <div className="relative h-[828px] shrink-0 overflow-hidden bg-white">
            <NetworkGraph />
            <Overview />
          </div>
          <ViewToolbar />
          <div className="h-[10px] shrink-0 bg-[#d4d4d4]" />
          <EdgeTable />
        </div>
        <RightStrip />
      </div>
      <BottomBar />
      <StatusBar />
      <ContextMenu />
      <SubMenu />
    </div>
  );
}
